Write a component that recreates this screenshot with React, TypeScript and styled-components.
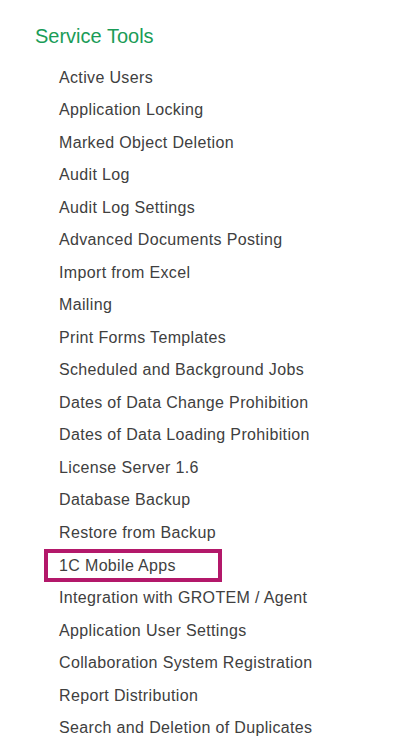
import React from "react";
import styled, { createGlobalStyle } from "styled-components";

const Global = createGlobalStyle`
  html, body { margin: 0; padding: 0; background: #ffffff; }
  body { font-family: "Liberation Sans", Arial, sans-serif; }
`;

const Page = styled.div`
  padding: 25px 0 0 35px;
  display: flex;
  flex-direction: column;
`;

const Heading = styled.h2`
  margin: 0 0 13.5px 0;
  font-family: "Liberation Sans", Arial, sans-serif;
  font-size: 20px;
  line-height: 23px;
  font-weight: normal;
  color: #1a9c57;
`;

const List = styled.ul`
  list-style: none;
  margin: 0;
  padding: 0 0 0 9px;
  display: flex;
  flex-direction: column;
  align-items: flex-start;
`;

const Item = styled.li<{ $active?: boolean }>`
  box-sizing: border-box;
  font-family: "Liberation Sans", Arial, sans-serif;
  font-size: 16px;
  letter-spacing: 0.35px;
  line-height: ${(p) => (p.$active ? "25px" : "24.5px")};
  color: #404040;
  border: 4px solid ${(p) => (p.$active ? "#b3186a" : "transparent")};
  padding: 0 0 0 11px;
  width: ${(p) => (p.$active ? "178px" : "auto")};
  white-space: nowrap;
`;

const items = [
  "Active Users",
  "Application Locking",
  "Marked Object Deletion",
  "Audit Log",
  "Audit Log Settings",
  "Advanced Documents Posting",
  "Import from Excel",
  "Mailing",
  "Print Forms Templates",
  "Scheduled and Background Jobs",
  "Dates of Data Change Prohibition",
  "Dates of Data Loading Prohibition",
  "License Server 1.6",
  "Database Backup",
  "Restore from Backup",
  "1C Mobile Apps",
  "Integration with GROTEM / Agent",
  "Application User Settings",
  "Collaboration System Registration",
  "Report Distribution",
  "Search and Deletion of Duplicates",
];

export default function App() {
  return (
    <>
      <Global />
      <Page>
        <Heading>Service Tools</Heading>
        <List>
          {items.map((t) => (
            <Item key={t} $active={t === "1C Mobile Apps"}>
              {t}
            </Item>
          ))}
        </List>
      </Page>
    </>
  );
}
